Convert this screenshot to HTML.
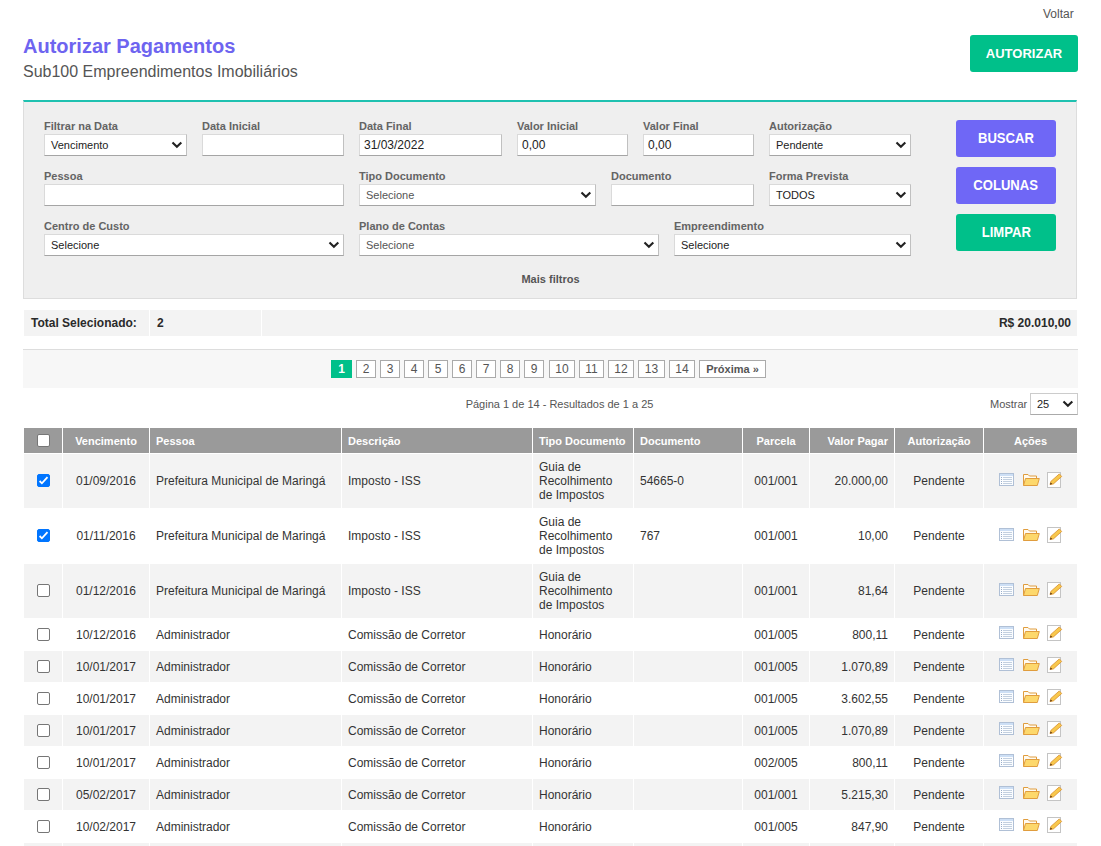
<!DOCTYPE html>
<html><head><meta charset="utf-8">
<style>
*{box-sizing:border-box;margin:0;padding:0}
html,body{width:1101px;height:846px;overflow:hidden;background:#fff}
body{font-family:"Liberation Sans",sans-serif;color:#333;font-size:12px;position:relative}
.abs{position:absolute}
#voltar{left:1043px;top:7px;font-size:12px;color:#555}
#title{left:23px;top:35px;font-size:20px;font-weight:bold;color:#6e64f0;white-space:nowrap}
#sub{left:23px;top:63px;font-size:16px;color:#555;white-space:nowrap}
.btn{position:absolute;border-radius:3px;color:#fff;text-align:center;font-size:14px;font-weight:bold}
#autorizar{left:970px;top:35px;width:108px;height:37px;line-height:37px;background:#00c08a;font-weight:bold;font-size:13px}
#filter{left:23px;top:100px;width:1054px;height:199px;background:#efefef;border:1px solid #ddd;border-top:2px solid #1fc1b0}
.lbl{position:absolute;font-size:11px;font-weight:bold;color:#646464;white-space:nowrap}
.inp{position:absolute;height:22px;background:#fff;border:1px solid #dadada;border-bottom-color:#a5a5a5;border-right-color:#c0c0c0;font-size:12px;color:#222;line-height:20px;padding-left:4px;white-space:nowrap}
.sel{padding-left:6px;font-size:11px}
.sel svg{position:absolute;right:3px;top:6px}
.ph{color:#555}
#buscar{left:956px;top:120px;width:100px;height:37px;line-height:37px;background:#6f67f6}
#colunas{left:956px;top:167px;width:100px;height:37px;line-height:37px;background:#6f67f6}
#limpar{left:956px;top:214px;width:100px;height:37px;line-height:37px;background:#00c08a}
#mais{left:0;width:1101px;text-align:center;top:273px;font-size:11px;font-weight:bold;color:#555}
.sc{position:absolute;height:26px;background:#f3f3f3;font-weight:bold;font-size:12px;line-height:26px;color:#2a2a2a}
#pag{left:23px;top:349px;width:1055px;height:39px;background:#f7f7f7;border-top:1px solid #ddd}
.pg{position:absolute;top:360px;height:18px;border:1px solid #aaa;background:#fff;color:#555;font-size:12px;line-height:16px;text-align:center}
.pg.act{background:#00c08a;border-color:#00c08a;color:#fff;font-weight:bold}
#info{left:9px;width:1101px;text-align:center;top:398px;font-size:11px;color:#555}
#mostrar{left:990px;top:398px;font-size:11px;color:#555}
#msel{left:1030px;top:393px;width:48px;height:22px;border:1px solid #ccc;border-bottom-color:#aaa;background:#fff;font-size:11px;line-height:20px;padding-left:6px;color:#222}
#.sel svg{position:absolute;right:3px;top:6px}
table{position:absolute;left:23px;top:427px;width:1055px;border-collapse:separate;border-spacing:1px;table-layout:fixed}
th{background:#9a9a9a;color:#fff;font-size:11px;font-weight:bold;height:25px;text-align:left;padding:0 6px;white-space:nowrap;overflow:hidden}
td{font-size:12px;color:#333;padding:0 6px;line-height:14px;white-space:nowrap;overflow:hidden}
tr.g td{background:#f3f3f3}
tr.w td{background:#fff}
.c{text-align:center}
.r{text-align:right}
.cb{display:inline-block;width:13px;height:13px;border:1px solid #767676;border-radius:2px;background:#fff;vertical-align:middle;position:relative}
.cb.on{background:#0075ff;border-color:#0075ff}
.ic{display:inline-block;vertical-align:middle}
.acts{display:block;margin-left:9px;position:relative;top:-1px}

.btn span{display:inline-block;transform:scaleX(.935)}
td .cb{top:-1px}
#msel svg{position:absolute;right:3px;top:6px}

td.s .acts{top:-2px}

</style></head><body>
<div class="abs" id="voltar">Voltar</div>
<div class="abs" id="title">Autorizar Pagamentos</div>
<div class="abs" id="sub">Sub100 Empreendimentos Imobiliários</div>
<div class="btn" id="autorizar">AUTORIZAR</div>
<div class="abs" id="filter"></div>
<div class="lbl" style="left:44px;top:120px">Filtrar na Data</div>
<div class="inp sel" style="left:44px;top:134px;width:143px">Vencimento<svg width="13" height="8" viewBox="0 0 13 8"><path d="M2.5 1.4 L6.9 5.8 L11.3 1.4" fill="none" stroke="#222" stroke-width="2.1"/></svg></div>
<div class="lbl" style="left:202px;top:120px">Data Inicial</div>
<div class="inp" style="left:202px;top:134px;width:142px"></div>
<div class="lbl" style="left:359px;top:120px">Data Final</div>
<div class="inp" style="left:359px;top:134px;width:143px">31/03/2022</div>
<div class="lbl" style="left:517px;top:120px">Valor Inicial</div>
<div class="inp" style="left:517px;top:134px;width:111px">0,00</div>
<div class="lbl" style="left:643px;top:120px">Valor Final</div>
<div class="inp" style="left:643px;top:134px;width:111px">0,00</div>
<div class="lbl" style="left:769px;top:120px">Autorização</div>
<div class="inp sel" style="left:769px;top:134px;width:142px">Pendente<svg width="13" height="8" viewBox="0 0 13 8"><path d="M2.5 1.4 L6.9 5.8 L11.3 1.4" fill="none" stroke="#222" stroke-width="2.1"/></svg></div>
<div class="lbl" style="left:44px;top:170px">Pessoa</div>
<div class="inp" style="left:44px;top:184px;width:300px"></div>
<div class="lbl" style="left:359px;top:170px">Tipo Documento</div>
<div class="inp sel ph" style="left:359px;top:184px;width:237px">Selecione<svg width="13" height="8" viewBox="0 0 13 8"><path d="M2.5 1.4 L6.9 5.8 L11.3 1.4" fill="none" stroke="#222" stroke-width="2.1"/></svg></div>
<div class="lbl" style="left:611px;top:170px">Documento</div>
<div class="inp" style="left:611px;top:184px;width:143px"></div>
<div class="lbl" style="left:769px;top:170px">Forma Prevista</div>
<div class="inp sel" style="left:769px;top:184px;width:142px">TODOS<svg width="13" height="8" viewBox="0 0 13 8"><path d="M2.5 1.4 L6.9 5.8 L11.3 1.4" fill="none" stroke="#222" stroke-width="2.1"/></svg></div>
<div class="lbl" style="left:44px;top:220px">Centro de Custo</div>
<div class="inp sel" style="left:44px;top:234px;width:300px">Selecione<svg width="13" height="8" viewBox="0 0 13 8"><path d="M2.5 1.4 L6.9 5.8 L11.3 1.4" fill="none" stroke="#222" stroke-width="2.1"/></svg></div>
<div class="lbl" style="left:359px;top:220px">Plano de Contas</div>
<div class="inp sel ph" style="left:359px;top:234px;width:300px">Selecione<svg width="13" height="8" viewBox="0 0 13 8"><path d="M2.5 1.4 L6.9 5.8 L11.3 1.4" fill="none" stroke="#222" stroke-width="2.1"/></svg></div>
<div class="lbl" style="left:674px;top:220px">Empreendimento</div>
<div class="inp sel" style="left:674px;top:234px;width:237px">Selecione<svg width="13" height="8" viewBox="0 0 13 8"><path d="M2.5 1.4 L6.9 5.8 L11.3 1.4" fill="none" stroke="#222" stroke-width="2.1"/></svg></div>
<div class="btn" id="buscar"><span>BUSCAR</span></div>
<div class="btn" id="colunas"><span>COLUNAS</span></div>
<div class="btn" id="limpar"><span>LIMPAR</span></div>
<div class="abs" id="mais">Mais filtros</div>
<div class="sc" style="left:24px;top:310px;width:125px;padding-left:7px;position:absolute">Total Selecionado:</div>
<div class="sc" style="left:150px;top:310px;width:111px;padding-left:7px;position:absolute">2</div>
<div class="sc" style="left:262px;top:310px;width:815px;padding-right:6px;text-align:right;position:absolute">R$ 20.010,00</div>
<div class="abs" id="pag"></div>
<div class="pg act" style="left:331px;width:21px;">1</div>
<div class="pg" style="left:356px;width:20px;">2</div>
<div class="pg" style="left:380px;width:20px;">3</div>
<div class="pg" style="left:404px;width:20px;">4</div>
<div class="pg" style="left:428px;width:20px;">5</div>
<div class="pg" style="left:452px;width:20px;">6</div>
<div class="pg" style="left:476px;width:20px;">7</div>
<div class="pg" style="left:500px;width:20px;">8</div>
<div class="pg" style="left:524px;width:20px;">9</div>
<div class="pg" style="left:549px;width:26px;">10</div>
<div class="pg" style="left:579px;width:25px;">11</div>
<div class="pg" style="left:608px;width:26px;">12</div>
<div class="pg" style="left:638px;width:27px;">13</div>
<div class="pg" style="left:669px;width:26px;">14</div>
<div class="pg" style="left:699px;width:67px;font-weight:bold;font-size:11px;">Próxima »</div>
<div class="abs" id="info">Página 1 de 14 - Resultados de 1 a 25</div>
<div class="abs" id="mostrar">Mostrar</div>
<div class="abs" id="msel">25<svg width="13" height="8" viewBox="0 0 13 8"><path d="M2.5 1.4 L6.9 5.8 L11.3 1.4" fill="none" stroke="#222" stroke-width="2.1"/></svg></div>
<table><colgroup><col style="width:38px"><col style="width:86px"><col style="width:191px"><col style="width:190px"><col style="width:100px"><col style="width:108px"><col style="width:66px"><col style="width:84px"><col style="width:88px"><col style="width:93px"></colgroup>
<tr><th class="c"><span class="cb"></span></th><th class="c">Vencimento</th><th class="">Pessoa</th><th class="">Descrição</th><th class="">Tipo Documento</th><th class="">Documento</th><th class="c">Parcela</th><th class="r">Valor Pagar</th><th class="c">Autorização</th><th class="c">Ações</th></tr>
<tr class="g" style="height:54px"><td class="c"><span class="cb on"><svg width="13" height="13" viewBox="0 0 13 13" style="position:absolute;left:-1px;top:-1px"><path d="M2.6 7L4.9 9.3L10.5 3.2" fill="none" stroke="#fff" stroke-width="1.8"/></svg></span></td><td class="c">01/09/2016</td><td>Prefeitura Municipal de Maringá</td><td>Imposto - ISS</td><td>Guia de<br>Recolhimento<br>de Impostos</td><td>54665-0</td><td class="c">001/001</td><td class="r">20.000,00</td><td class="c">Pendente</td><td class="c"><svg class="acts" width="64" height="16" viewBox="0 0 64 16"><rect x="0.5" y="1.5" width="14" height="12" fill="#fbfdff" stroke="#b0c0d6"/><rect x="1" y="2" width="13" height="2" fill="#cddff5"/><g fill="#98acc8"><rect x="2" y="5" width="1" height="1"/><rect x="2" y="7" width="1" height="1"/><rect x="2" y="9" width="1" height="1"/><rect x="2" y="11" width="1" height="1"/></g><g fill="#c3d0e0"><rect x="4" y="5" width="9" height="1"/><rect x="4" y="7" width="9" height="1"/><rect x="4" y="9" width="9" height="1"/><rect x="4" y="11" width="9" height="1"/></g><path d="M24.5 13.5V2.5H29L30.5 4H37.5V7" fill="#fffaf0" stroke="#e09d3e"/><path d="M24.5 13.5L26.5 6.5H40.3L38.3 13.5Z" fill="#fdd86c" stroke="#e09d3e"/><rect x="48.5" y="0.5" width="13" height="15" fill="#fff" stroke="#c4c4c4"/><path d="M51 12.6L52 9.3L60.3 1.9L62.7 4.5L54.4 11.9Z" fill="#f8c84c" stroke="#d98f2e" stroke-width="0.8"/><path d="M51 12.6L51.7 10.4L53.2 11.9Z" fill="#4a2a10"/></svg></td></tr>
<tr class="w" style="height:54px"><td class="c"><span class="cb on"><svg width="13" height="13" viewBox="0 0 13 13" style="position:absolute;left:-1px;top:-1px"><path d="M2.6 7L4.9 9.3L10.5 3.2" fill="none" stroke="#fff" stroke-width="1.8"/></svg></span></td><td class="c">01/11/2016</td><td>Prefeitura Municipal de Maringá</td><td>Imposto - ISS</td><td>Guia de<br>Recolhimento<br>de Impostos</td><td>767</td><td class="c">001/001</td><td class="r">10,00</td><td class="c">Pendente</td><td class="c"><svg class="acts" width="64" height="16" viewBox="0 0 64 16"><rect x="0.5" y="1.5" width="14" height="12" fill="#fbfdff" stroke="#b0c0d6"/><rect x="1" y="2" width="13" height="2" fill="#cddff5"/><g fill="#98acc8"><rect x="2" y="5" width="1" height="1"/><rect x="2" y="7" width="1" height="1"/><rect x="2" y="9" width="1" height="1"/><rect x="2" y="11" width="1" height="1"/></g><g fill="#c3d0e0"><rect x="4" y="5" width="9" height="1"/><rect x="4" y="7" width="9" height="1"/><rect x="4" y="9" width="9" height="1"/><rect x="4" y="11" width="9" height="1"/></g><path d="M24.5 13.5V2.5H29L30.5 4H37.5V7" fill="#fffaf0" stroke="#e09d3e"/><path d="M24.5 13.5L26.5 6.5H40.3L38.3 13.5Z" fill="#fdd86c" stroke="#e09d3e"/><rect x="48.5" y="0.5" width="13" height="15" fill="#fff" stroke="#c4c4c4"/><path d="M51 12.6L52 9.3L60.3 1.9L62.7 4.5L54.4 11.9Z" fill="#f8c84c" stroke="#d98f2e" stroke-width="0.8"/><path d="M51 12.6L51.7 10.4L53.2 11.9Z" fill="#4a2a10"/></svg></td></tr>
<tr class="g" style="height:54px"><td class="c"><span class="cb"></span></td><td class="c">01/12/2016</td><td>Prefeitura Municipal de Maringá</td><td>Imposto - ISS</td><td>Guia de<br>Recolhimento<br>de Impostos</td><td></td><td class="c">001/001</td><td class="r">81,64</td><td class="c">Pendente</td><td class="c"><svg class="acts" width="64" height="16" viewBox="0 0 64 16"><rect x="0.5" y="1.5" width="14" height="12" fill="#fbfdff" stroke="#b0c0d6"/><rect x="1" y="2" width="13" height="2" fill="#cddff5"/><g fill="#98acc8"><rect x="2" y="5" width="1" height="1"/><rect x="2" y="7" width="1" height="1"/><rect x="2" y="9" width="1" height="1"/><rect x="2" y="11" width="1" height="1"/></g><g fill="#c3d0e0"><rect x="4" y="5" width="9" height="1"/><rect x="4" y="7" width="9" height="1"/><rect x="4" y="9" width="9" height="1"/><rect x="4" y="11" width="9" height="1"/></g><path d="M24.5 13.5V2.5H29L30.5 4H37.5V7" fill="#fffaf0" stroke="#e09d3e"/><path d="M24.5 13.5L26.5 6.5H40.3L38.3 13.5Z" fill="#fdd86c" stroke="#e09d3e"/><rect x="48.5" y="0.5" width="13" height="15" fill="#fff" stroke="#c4c4c4"/><path d="M51 12.6L52 9.3L60.3 1.9L62.7 4.5L54.4 11.9Z" fill="#f8c84c" stroke="#d98f2e" stroke-width="0.8"/><path d="M51 12.6L51.7 10.4L53.2 11.9Z" fill="#4a2a10"/></svg></td></tr>
<tr class="w" style="height:31px"><td class="c"><span class="cb"></span></td><td class="c">10/12/2016</td><td>Administrador</td><td>Comissão de Corretor</td><td>Honorário</td><td></td><td class="c">001/005</td><td class="r">800,11</td><td class="c">Pendente</td><td class="c s"><svg class="acts" width="64" height="16" viewBox="0 0 64 16"><rect x="0.5" y="1.5" width="14" height="12" fill="#fbfdff" stroke="#b0c0d6"/><rect x="1" y="2" width="13" height="2" fill="#cddff5"/><g fill="#98acc8"><rect x="2" y="5" width="1" height="1"/><rect x="2" y="7" width="1" height="1"/><rect x="2" y="9" width="1" height="1"/><rect x="2" y="11" width="1" height="1"/></g><g fill="#c3d0e0"><rect x="4" y="5" width="9" height="1"/><rect x="4" y="7" width="9" height="1"/><rect x="4" y="9" width="9" height="1"/><rect x="4" y="11" width="9" height="1"/></g><path d="M24.5 13.5V2.5H29L30.5 4H37.5V7" fill="#fffaf0" stroke="#e09d3e"/><path d="M24.5 13.5L26.5 6.5H40.3L38.3 13.5Z" fill="#fdd86c" stroke="#e09d3e"/><rect x="48.5" y="0.5" width="13" height="15" fill="#fff" stroke="#c4c4c4"/><path d="M51 12.6L52 9.3L60.3 1.9L62.7 4.5L54.4 11.9Z" fill="#f8c84c" stroke="#d98f2e" stroke-width="0.8"/><path d="M51 12.6L51.7 10.4L53.2 11.9Z" fill="#4a2a10"/></svg></td></tr>
<tr class="g" style="height:31px"><td class="c"><span class="cb"></span></td><td class="c">10/01/2017</td><td>Administrador</td><td>Comissão de Corretor</td><td>Honorário</td><td></td><td class="c">001/005</td><td class="r">1.070,89</td><td class="c">Pendente</td><td class="c s"><svg class="acts" width="64" height="16" viewBox="0 0 64 16"><rect x="0.5" y="1.5" width="14" height="12" fill="#fbfdff" stroke="#b0c0d6"/><rect x="1" y="2" width="13" height="2" fill="#cddff5"/><g fill="#98acc8"><rect x="2" y="5" width="1" height="1"/><rect x="2" y="7" width="1" height="1"/><rect x="2" y="9" width="1" height="1"/><rect x="2" y="11" width="1" height="1"/></g><g fill="#c3d0e0"><rect x="4" y="5" width="9" height="1"/><rect x="4" y="7" width="9" height="1"/><rect x="4" y="9" width="9" height="1"/><rect x="4" y="11" width="9" height="1"/></g><path d="M24.5 13.5V2.5H29L30.5 4H37.5V7" fill="#fffaf0" stroke="#e09d3e"/><path d="M24.5 13.5L26.5 6.5H40.3L38.3 13.5Z" fill="#fdd86c" stroke="#e09d3e"/><rect x="48.5" y="0.5" width="13" height="15" fill="#fff" stroke="#c4c4c4"/><path d="M51 12.6L52 9.3L60.3 1.9L62.7 4.5L54.4 11.9Z" fill="#f8c84c" stroke="#d98f2e" stroke-width="0.8"/><path d="M51 12.6L51.7 10.4L53.2 11.9Z" fill="#4a2a10"/></svg></td></tr>
<tr class="w" style="height:31px"><td class="c"><span class="cb"></span></td><td class="c">10/01/2017</td><td>Administrador</td><td>Comissão de Corretor</td><td>Honorário</td><td></td><td class="c">001/005</td><td class="r">3.602,55</td><td class="c">Pendente</td><td class="c s"><svg class="acts" width="64" height="16" viewBox="0 0 64 16"><rect x="0.5" y="1.5" width="14" height="12" fill="#fbfdff" stroke="#b0c0d6"/><rect x="1" y="2" width="13" height="2" fill="#cddff5"/><g fill="#98acc8"><rect x="2" y="5" width="1" height="1"/><rect x="2" y="7" width="1" height="1"/><rect x="2" y="9" width="1" height="1"/><rect x="2" y="11" width="1" height="1"/></g><g fill="#c3d0e0"><rect x="4" y="5" width="9" height="1"/><rect x="4" y="7" width="9" height="1"/><rect x="4" y="9" width="9" height="1"/><rect x="4" y="11" width="9" height="1"/></g><path d="M24.5 13.5V2.5H29L30.5 4H37.5V7" fill="#fffaf0" stroke="#e09d3e"/><path d="M24.5 13.5L26.5 6.5H40.3L38.3 13.5Z" fill="#fdd86c" stroke="#e09d3e"/><rect x="48.5" y="0.5" width="13" height="15" fill="#fff" stroke="#c4c4c4"/><path d="M51 12.6L52 9.3L60.3 1.9L62.7 4.5L54.4 11.9Z" fill="#f8c84c" stroke="#d98f2e" stroke-width="0.8"/><path d="M51 12.6L51.7 10.4L53.2 11.9Z" fill="#4a2a10"/></svg></td></tr>
<tr class="g" style="height:31px"><td class="c"><span class="cb"></span></td><td class="c">10/01/2017</td><td>Administrador</td><td>Comissão de Corretor</td><td>Honorário</td><td></td><td class="c">001/005</td><td class="r">1.070,89</td><td class="c">Pendente</td><td class="c s"><svg class="acts" width="64" height="16" viewBox="0 0 64 16"><rect x="0.5" y="1.5" width="14" height="12" fill="#fbfdff" stroke="#b0c0d6"/><rect x="1" y="2" width="13" height="2" fill="#cddff5"/><g fill="#98acc8"><rect x="2" y="5" width="1" height="1"/><rect x="2" y="7" width="1" height="1"/><rect x="2" y="9" width="1" height="1"/><rect x="2" y="11" width="1" height="1"/></g><g fill="#c3d0e0"><rect x="4" y="5" width="9" height="1"/><rect x="4" y="7" width="9" height="1"/><rect x="4" y="9" width="9" height="1"/><rect x="4" y="11" width="9" height="1"/></g><path d="M24.5 13.5V2.5H29L30.5 4H37.5V7" fill="#fffaf0" stroke="#e09d3e"/><path d="M24.5 13.5L26.5 6.5H40.3L38.3 13.5Z" fill="#fdd86c" stroke="#e09d3e"/><rect x="48.5" y="0.5" width="13" height="15" fill="#fff" stroke="#c4c4c4"/><path d="M51 12.6L52 9.3L60.3 1.9L62.7 4.5L54.4 11.9Z" fill="#f8c84c" stroke="#d98f2e" stroke-width="0.8"/><path d="M51 12.6L51.7 10.4L53.2 11.9Z" fill="#4a2a10"/></svg></td></tr>
<tr class="w" style="height:31px"><td class="c"><span class="cb"></span></td><td class="c">10/01/2017</td><td>Administrador</td><td>Comissão de Corretor</td><td>Honorário</td><td></td><td class="c">002/005</td><td class="r">800,11</td><td class="c">Pendente</td><td class="c s"><svg class="acts" width="64" height="16" viewBox="0 0 64 16"><rect x="0.5" y="1.5" width="14" height="12" fill="#fbfdff" stroke="#b0c0d6"/><rect x="1" y="2" width="13" height="2" fill="#cddff5"/><g fill="#98acc8"><rect x="2" y="5" width="1" height="1"/><rect x="2" y="7" width="1" height="1"/><rect x="2" y="9" width="1" height="1"/><rect x="2" y="11" width="1" height="1"/></g><g fill="#c3d0e0"><rect x="4" y="5" width="9" height="1"/><rect x="4" y="7" width="9" height="1"/><rect x="4" y="9" width="9" height="1"/><rect x="4" y="11" width="9" height="1"/></g><path d="M24.5 13.5V2.5H29L30.5 4H37.5V7" fill="#fffaf0" stroke="#e09d3e"/><path d="M24.5 13.5L26.5 6.5H40.3L38.3 13.5Z" fill="#fdd86c" stroke="#e09d3e"/><rect x="48.5" y="0.5" width="13" height="15" fill="#fff" stroke="#c4c4c4"/><path d="M51 12.6L52 9.3L60.3 1.9L62.7 4.5L54.4 11.9Z" fill="#f8c84c" stroke="#d98f2e" stroke-width="0.8"/><path d="M51 12.6L51.7 10.4L53.2 11.9Z" fill="#4a2a10"/></svg></td></tr>
<tr class="g" style="height:31px"><td class="c"><span class="cb"></span></td><td class="c">05/02/2017</td><td>Administrador</td><td>Comissão de Corretor</td><td>Honorário</td><td></td><td class="c">001/001</td><td class="r">5.215,30</td><td class="c">Pendente</td><td class="c s"><svg class="acts" width="64" height="16" viewBox="0 0 64 16"><rect x="0.5" y="1.5" width="14" height="12" fill="#fbfdff" stroke="#b0c0d6"/><rect x="1" y="2" width="13" height="2" fill="#cddff5"/><g fill="#98acc8"><rect x="2" y="5" width="1" height="1"/><rect x="2" y="7" width="1" height="1"/><rect x="2" y="9" width="1" height="1"/><rect x="2" y="11" width="1" height="1"/></g><g fill="#c3d0e0"><rect x="4" y="5" width="9" height="1"/><rect x="4" y="7" width="9" height="1"/><rect x="4" y="9" width="9" height="1"/><rect x="4" y="11" width="9" height="1"/></g><path d="M24.5 13.5V2.5H29L30.5 4H37.5V7" fill="#fffaf0" stroke="#e09d3e"/><path d="M24.5 13.5L26.5 6.5H40.3L38.3 13.5Z" fill="#fdd86c" stroke="#e09d3e"/><rect x="48.5" y="0.5" width="13" height="15" fill="#fff" stroke="#c4c4c4"/><path d="M51 12.6L52 9.3L60.3 1.9L62.7 4.5L54.4 11.9Z" fill="#f8c84c" stroke="#d98f2e" stroke-width="0.8"/><path d="M51 12.6L51.7 10.4L53.2 11.9Z" fill="#4a2a10"/></svg></td></tr>
<tr class="w" style="height:31px"><td class="c"><span class="cb"></span></td><td class="c">10/02/2017</td><td>Administrador</td><td>Comissão de Corretor</td><td>Honorário</td><td></td><td class="c">001/005</td><td class="r">847,90</td><td class="c">Pendente</td><td class="c s"><svg class="acts" width="64" height="16" viewBox="0 0 64 16"><rect x="0.5" y="1.5" width="14" height="12" fill="#fbfdff" stroke="#b0c0d6"/><rect x="1" y="2" width="13" height="2" fill="#cddff5"/><g fill="#98acc8"><rect x="2" y="5" width="1" height="1"/><rect x="2" y="7" width="1" height="1"/><rect x="2" y="9" width="1" height="1"/><rect x="2" y="11" width="1" height="1"/></g><g fill="#c3d0e0"><rect x="4" y="5" width="9" height="1"/><rect x="4" y="7" width="9" height="1"/><rect x="4" y="9" width="9" height="1"/><rect x="4" y="11" width="9" height="1"/></g><path d="M24.5 13.5V2.5H29L30.5 4H37.5V7" fill="#fffaf0" stroke="#e09d3e"/><path d="M24.5 13.5L26.5 6.5H40.3L38.3 13.5Z" fill="#fdd86c" stroke="#e09d3e"/><rect x="48.5" y="0.5" width="13" height="15" fill="#fff" stroke="#c4c4c4"/><path d="M51 12.6L52 9.3L60.3 1.9L62.7 4.5L54.4 11.9Z" fill="#f8c84c" stroke="#d98f2e" stroke-width="0.8"/><path d="M51 12.6L51.7 10.4L53.2 11.9Z" fill="#4a2a10"/></svg></td></tr>
<tr class="g" style="height:31px"><td class="c"><span class="cb"></span></td><td class="c">10/02/2017</td><td>Administrador</td><td>Comissão de Corretor</td><td>Honorário</td><td></td><td class="c">001/005</td><td class="r">847,90</td><td class="c">Pendente</td><td class="c s"><svg class="acts" width="64" height="16" viewBox="0 0 64 16"><rect x="0.5" y="1.5" width="14" height="12" fill="#fbfdff" stroke="#b0c0d6"/><rect x="1" y="2" width="13" height="2" fill="#cddff5"/><g fill="#98acc8"><rect x="2" y="5" width="1" height="1"/><rect x="2" y="7" width="1" height="1"/><rect x="2" y="9" width="1" height="1"/><rect x="2" y="11" width="1" height="1"/></g><g fill="#c3d0e0"><rect x="4" y="5" width="9" height="1"/><rect x="4" y="7" width="9" height="1"/><rect x="4" y="9" width="9" height="1"/><rect x="4" y="11" width="9" height="1"/></g><path d="M24.5 13.5V2.5H29L30.5 4H37.5V7" fill="#fffaf0" stroke="#e09d3e"/><path d="M24.5 13.5L26.5 6.5H40.3L38.3 13.5Z" fill="#fdd86c" stroke="#e09d3e"/><rect x="48.5" y="0.5" width="13" height="15" fill="#fff" stroke="#c4c4c4"/><path d="M51 12.6L52 9.3L60.3 1.9L62.7 4.5L54.4 11.9Z" fill="#f8c84c" stroke="#d98f2e" stroke-width="0.8"/><path d="M51 12.6L51.7 10.4L53.2 11.9Z" fill="#4a2a10"/></svg></td></tr>
</table>
</body></html>
